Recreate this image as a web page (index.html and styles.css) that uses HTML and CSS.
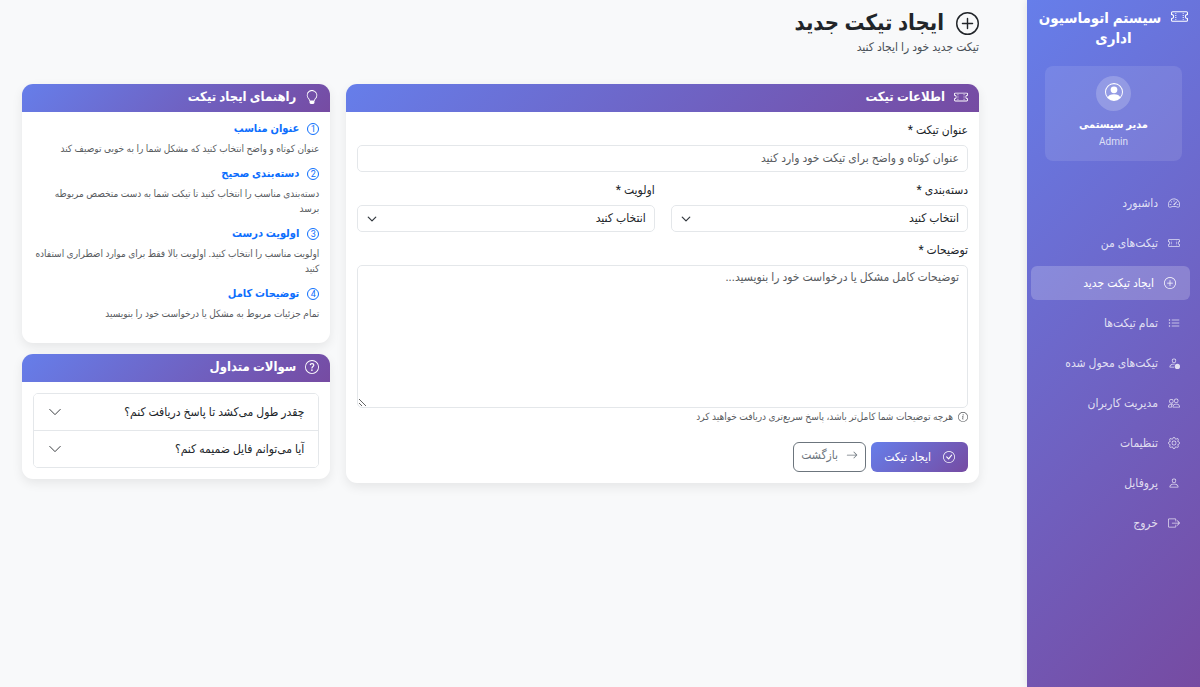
FILE: index.html
```html
<!DOCTYPE html>
<html lang="fa" dir="rtl">
<head>
    <meta charset="UTF-8">
    <meta name="viewport" content="width=device-width, initial-scale=1.0">
    <title>ایجاد تیکت جدید - سیستم اتوماسیون اداری</title>
    <link rel="stylesheet" href="styles.css">
</head>
<body>
    <!-- Icons -->
    <svg class="sprite" aria-hidden="true">
        <symbol id="ticket" viewBox="0 0 16 16"><path d="M4 4.85v.9h1v-.9zm7 0v.9h1v-.9zm-7 1.8v.9h1v-.9zm7 0v.9h1v-.9zm-7 1.8v.9h1v-.9zm7 0v.9h1v-.9zm-7 1.8v.9h1v-.9zm7 0v.9h1v-.9z"/><path d="M1.5 3A1.5 1.5 0 0 0 0 4.5V6a.5.5 0 0 0 .5.5 1.5 1.5 0 1 1 0 3 .5.5 0 0 0-.5.5v1.5A1.5 1.5 0 0 0 1.5 13h13a1.5 1.5 0 0 0 1.5-1.5V10a.5.5 0 0 0-.5-.5 1.5 1.5 0 0 1 0-3A.5.5 0 0 0 16 6V4.5A1.5 1.5 0 0 0 14.5 3zM1 4.5a.5.5 0 0 1 .5-.5h13a.5.5 0 0 1 .5.5v1.05a2.5 2.5 0 0 0 0 4.9v1.05a.5.5 0 0 1-.5.5h-13a.5.5 0 0 1-.5-.5v-1.05a2.5 2.5 0 0 0 0-4.9z"/></symbol>
        <symbol id="plus-circle" viewBox="0 0 16 16"><path d="M8 15A7 7 0 1 1 8 1a7 7 0 0 1 0 14m0 1A8 8 0 1 0 8 0a8 8 0 0 0 0 16"/><path d="M8 4a.5.5 0 0 1 .5.5v3h3a.5.5 0 0 1 0 1h-3v3a.5.5 0 0 1-1 0v-3h-3a.5.5 0 0 1 0-1h3v-3A.5.5 0 0 1 8 4"/></symbol>
        <symbol id="speedometer" viewBox="0 0 16 16"><path d="M8 4a.5.5 0 0 1 .5.5V6a.5.5 0 0 1-1 0V4.5A.5.5 0 0 1 8 4M3.732 5.732a.5.5 0 0 1 .707 0l.915.914a.5.5 0 1 1-.708.708l-.914-.915a.5.5 0 0 1 0-.707M2 10a.5.5 0 0 1 .5-.5h1.586a.5.5 0 0 1 0 1H2.5A.5.5 0 0 1 2 10m9.5 0a.5.5 0 0 1 .5-.5h1.5a.5.5 0 0 1 0 1H12a.5.5 0 0 1-.5-.5m.754-4.246a.39.39 0 0 0-.527-.02L7.547 9.31a.91.91 0 1 0 1.302 1.258l3.434-4.297a.39.39 0 0 0-.029-.518z"/><path fill-rule="evenodd" d="M0 10a8 8 0 1 1 15.547 2.661c-.442 1.253-1.845 1.602-2.932 1.25C11.309 13.488 9.475 13 8 13c-1.474 0-3.31.488-4.615.911-1.087.352-2.49.003-2.932-1.25A8 8 0 0 1 0 10m8-7a7 7 0 0 0-6.603 9.329c.203.575.923.876 1.68.63C4.397 12.533 6.358 12 8 12s3.604.532 4.923.96c.757.245 1.477-.056 1.68-.631A7 7 0 0 0 8 3"/></symbol>
        <symbol id="list" viewBox="0 0 16 16"><circle cx="2" cy="4" r="1"/><circle cx="2" cy="8" r="1"/><circle cx="2" cy="12" r="1"/><path d="M5.5 4h9M5.5 8h9M5.5 12h9" fill="none" stroke="currentColor" stroke-linecap="round"/></symbol>
        <symbol id="person-dot" viewBox="0 0 16 16"><circle cx="12.5" cy="12.5" r="3.5"/><path d="M11 5a3 3 0 1 1-6 0 3 3 0 0 1 6 0M8 7a2 2 0 1 0 0-4 2 2 0 0 0 0 4"/><path d="M8.256 14a4.5 4.5 0 0 1-.229-1.004H3c.001-.246.154-.986.832-1.664C4.484 10.68 5.711 10 8 10q.39 0 .74.025c.226-.341.496-.65.804-.918Q8.844 9.002 8 9c-5 0-6 3-6 4s1 1 1 1z"/></symbol>
        <symbol id="people" viewBox="0 0 16 16"><path d="M15 14s1 0 1-1-1-4-5-4-5 3-5 4 1 1 1 1zm-7.978-1L7 12.996c.001-.264.167-1.03.76-1.72C8.312 10.629 9.282 10 11 10c1.717 0 2.687.63 3.24 1.276.593.69.758 1.457.76 1.72l-.008.002-.014.002zM11 7a2 2 0 1 0 0-4 2 2 0 0 0 0 4m3-2a3 3 0 1 1-6 0 3 3 0 0 1 6 0M6.936 9.28a6 6 0 0 0-1.23-.247A7 7 0 0 0 5 9c-4 0-5 3-5 4q0 1 1 1h4.216A2.24 2.24 0 0 1 5 13c0-1.01.377-2.042 1.09-2.904.243-.294.526-.569.846-.816M4.92 10A5.5 5.5 0 0 0 4 13H1c0-.26.164-1.03.76-1.724.545-.636 1.492-1.256 3.16-1.275ZM1.5 5.5a3 3 0 1 1 6 0 3 3 0 0 1-6 0m3-2a2 2 0 1 0 0 4 2 2 0 0 0 0-4"/></symbol>
        <symbol id="gear" viewBox="0 0 16 16"><path d="M8 4.754a3.246 3.246 0 1 0 0 6.492 3.246 3.246 0 0 0 0-6.492M5.754 8a2.246 2.246 0 1 1 4.492 0 2.246 2.246 0 0 1-4.492 0"/><path d="M9.796 1.343c-.527-1.79-3.065-1.79-3.592 0l-.094.319a.873.873 0 0 1-1.255.52l-.292-.16c-1.64-.892-3.433.902-2.54 2.541l.159.292a.873.873 0 0 1-.52 1.255l-.319.094c-1.79.527-1.79 3.065 0 3.592l.319.094a.873.873 0 0 1 .52 1.255l-.16.292c-.892 1.64.901 3.434 2.541 2.54l.292-.159a.873.873 0 0 1 1.255.52l.094.319c.527 1.79 3.065 1.79 3.592 0l.094-.319a.873.873 0 0 1 1.255-.52l.292.16c1.64.893 3.434-.902 2.54-2.541l-.159-.292a.873.873 0 0 1 .52-1.255l.319-.094c1.79-.527 1.79-3.065 0-3.592l-.319-.094a.873.873 0 0 1-.52-1.255l.16-.292c.893-1.64-.902-3.433-2.541-2.54l-.292.159a.873.873 0 0 1-1.255-.52zm-2.633.283c.246-.835 1.428-.835 1.674 0l.094.319a1.873 1.873 0 0 0 2.693 1.115l.291-.16c.764-.415 1.6.42 1.184 1.185l-.159.292a1.873 1.873 0 0 0 1.116 2.692l.318.094c.835.246.835 1.428 0 1.674l-.319.094a1.873 1.873 0 0 0-1.115 2.693l.16.291c.415.764-.42 1.6-1.185 1.184l-.291-.159a1.873 1.873 0 0 0-2.693 1.116l-.094.318c-.246.835-1.428.835-1.674 0l-.094-.319a1.873 1.873 0 0 0-2.692-1.115l-.292.16c-.764.415-1.6-.42-1.184-1.185l.159-.291A1.873 1.873 0 0 0 1.945 8.93l-.319-.094c-.835-.246-.835-1.428 0-1.674l.319-.094A1.873 1.873 0 0 0 3.06 4.377l-.16-.292c-.415-.764.42-1.6 1.185-1.184l.292.159a1.873 1.873 0 0 0 2.692-1.115z"/></symbol>
        <symbol id="person" viewBox="0 0 16 16"><path d="M8 8a3 3 0 1 0 0-6 3 3 0 0 0 0 6m2-3a2 2 0 1 1-4 0 2 2 0 0 1 4 0m4 8c0 1-1 1-1 1H3s-1 0-1-1 1-4 6-4 6 3 6 4m-1-.004c-.001-.246-.154-.986-.832-1.664C11.516 10.68 10.289 10 8 10s-3.516.68-4.168 1.332c-.678.678-.83 1.418-.832 1.664z"/></symbol>
        <symbol id="logout" viewBox="0 0 16 16"><path d="M10 12.5a.5.5 0 0 1-.5.5h-8a.5.5 0 0 1-.5-.5v-9a.5.5 0 0 1 .5-.5h8a.5.5 0 0 1 .5.5v2a.5.5 0 0 0 1 0v-2A1.5 1.5 0 0 0 9.5 2h-8A1.5 1.5 0 0 0 0 3.5v9A1.5 1.5 0 0 0 1.5 14h8a1.5 1.5 0 0 0 1.5-1.5v-2a.5.5 0 0 0-1 0z"/><path d="M15.854 8.354a.5.5 0 0 0 0-.708l-3-3a.5.5 0 0 0-.708.708L14.293 7.5H5.5a.5.5 0 0 0 0 1h8.793l-2.147 2.146a.5.5 0 0 0 .708.708z"/></symbol>
        <symbol id="person-circle" viewBox="0 0 16 16"><path d="M11 6a3 3 0 1 1-6 0 3 3 0 0 1 6 0"/><path fill-rule="evenodd" d="M0 8a8 8 0 1 1 16 0A8 8 0 0 1 0 8m8-7a7 7 0 0 0-5.468 11.37C3.242 11.226 4.805 10 8 10s4.757 1.225 5.468 2.37A7 7 0 0 0 8 1"/></symbol>
        <symbol id="lightbulb" viewBox="0 0 16 16"><path d="M2 6a6 6 0 1 1 10.174 4.31c-.203.196-.359.4-.453.619l-.762 1.769A.5.5 0 0 1 10.5 13a.5.5 0 0 1 0 1 .5.5 0 0 1 0 1l-.224.447a1 1 0 0 1-.894.553H6.618a1 1 0 0 1-.894-.553L5.5 15a.5.5 0 0 1 0-1 .5.5 0 0 1 0-1 .5.5 0 0 1-.46-.302l-.761-1.77a2 2 0 0 0-.453-.618A5.98 5.98 0 0 1 2 6m6-5a5 5 0 0 0-3.479 8.592c.263.254.514.564.676.941L5.83 12h4.342l.632-1.467c.162-.377.413-.687.676-.941A5 5 0 0 0 8 1"/></symbol>
        <symbol id="question" viewBox="0 0 16 16"><path d="M8 15A7 7 0 1 1 8 1a7 7 0 0 1 0 14m0 1A8 8 0 1 0 8 0a8 8 0 0 0 0 16"/><path d="M5.9 5.9C6 4.7 6.8 4.1 8 4.1s2.1.6 2.1 1.7c0 1.5-2.2 1.7-2.2 3.5v.3" fill="none" stroke="currentColor" stroke-width="1.3"/><circle cx="7.9" cy="11.6" r=".95"/></symbol>
        <symbol id="info" viewBox="0 0 16 16"><path d="M8 15A7 7 0 1 1 8 1a7 7 0 0 1 0 14m0 1A8 8 0 1 0 8 0a8 8 0 0 0 0 16"/><path d="M6.7 7.2l1.5-.2-.9 4.2q-.1.6 1.2.2" fill="none" stroke="currentColor" stroke-width="1.2"/><circle cx="8.2" cy="4.5" r="1"/></symbol>
        <symbol id="check" viewBox="0 0 16 16"><path d="M8 15A7 7 0 1 1 8 1a7 7 0 0 1 0 14m0 1A8 8 0 1 0 8 0a8 8 0 0 0 0 16"/><path d="m10.97 4.97-.02.022-3.473 4.425-2.093-2.094a.75.75 0 0 0-1.06 1.06L6.97 11.03a.75.75 0 0 0 1.079-.02l3.992-4.99a.75.75 0 0 0-1.071-1.05"/></symbol>
        <symbol id="arrow" viewBox="0 0 16 16"><path d="M1 8a.5.5 0 0 1 .5-.5h11.793l-3.147-3.146a.5.5 0 0 1 .708-.708l4 4a.5.5 0 0 1 0 .708l-4 4a.5.5 0 0 1-.708-.708L13.293 8.5H1.5A.5.5 0 0 1 1 8"/></symbol>
        <symbol id="chevron" viewBox="0 0 16 16"><path d="M2 5l6 6 6-6" fill="none" stroke="currentColor" stroke-linecap="round" stroke-linejoin="round"/></symbol>
    </svg>

    <div class="layout">
        <!-- Sidebar -->
        <aside class="sidebar">
            <div class="brand"><svg class="icon"><use href="#ticket"/></svg>سیستم اتوماسیون اداری</div>

            <div class="user-info">
                <div class="avatar"><svg class="icon"><use href="#person-circle"/></svg></div>
                <div class="user-name">مدیر سیستمی</div>
                <div class="user-role">Admin</div>
            </div>

            <nav class="menu">
                <a href="#"><svg class="icon"><use href="#speedometer"/></svg>داشبورد</a>
                <a href="#"><svg class="icon"><use href="#ticket"/></svg>تیکت‌های من</a>
                <a href="#" class="active"><svg class="icon"><use href="#plus-circle"/></svg>ایجاد تیکت جدید</a>
                <a href="#"><svg class="icon"><use href="#list"/></svg>تمام تیکت‌ها</a>
                <a href="#"><svg class="icon"><use href="#person-dot"/></svg>تیکت‌های محول شده</a>
                <a href="#"><svg class="icon"><use href="#people"/></svg>مدیریت کاربران</a>
                <a href="#"><svg class="icon"><use href="#gear"/></svg>تنظیمات</a>
                <a href="#"><svg class="icon"><use href="#person"/></svg>پروفایل</a>
                <a href="#"><svg class="icon"><use href="#logout"/></svg>خروج</a>
            </nav>
        </aside>

        <main class="content">
            <header class="page-header">
                <h1><svg class="icon"><use href="#plus-circle"/></svg>ایجاد تیکت جدید</h1>
                <p>تیکت جدید خود را ایجاد کنید</p>
            </header>

            <div class="row">
                <!-- Ticket form -->
                <section class="card card-form">
                    <h2 class="card-header"><svg class="icon"><use href="#ticket"/></svg>اطلاعات تیکت</h2>
                    <form class="card-body">
                        <div class="field">
                            <label for="title">عنوان تیکت *</label>
                            <input type="text" id="title" class="control" placeholder="عنوان کوتاه و واضح برای تیکت خود وارد کنید">
                        </div>
                        <div class="field-row">
                            <div class="field">
                                <label for="category">دسته‌بندی *</label>
                                <select id="category" class="control select">
                                    <option>انتخاب کنید</option>
                                </select>
                            </div>
                            <div class="field">
                                <label for="priority">اولویت *</label>
                                <select id="priority" class="control select">
                                    <option>انتخاب کنید</option>
                                </select>
                            </div>
                        </div>
                        <div class="field">
                            <label for="description">توضیحات *</label>
                            <textarea id="description" class="control" placeholder="توضیحات کامل مشکل یا درخواست خود را بنویسید..."></textarea>
                            <div class="form-text"><svg class="icon"><use href="#info"/></svg>هرچه توضیحات شما کامل‌تر باشد، پاسخ سریع‌تری دریافت خواهید کرد</div>
                        </div>
                        <div class="actions">
                            <button type="submit" class="btn btn-primary"><svg class="icon"><use href="#check"/></svg>ایجاد تیکت</button>
                            <a href="#" class="btn btn-outline"><svg class="icon"><use href="#arrow"/></svg>بازگشت</a>
                        </div>
                    </form>
                </section>

                <div class="side">
                    <!-- Guide -->
                    <section class="card">
                        <h2 class="card-header"><svg class="icon"><use href="#lightbulb"/></svg>راهنمای ایجاد تیکت</h2>
                        <div class="card-body guide">
                            <h3><span class="step">1</span>عنوان مناسب</h3>
                            <p>عنوان کوتاه و واضح انتخاب کنید که مشکل شما را به خوبی توصیف کند</p>
                            <h3><span class="step">2</span>دسته‌بندی صحیح</h3>
                            <p>دسته‌بندی مناسب را انتخاب کنید تا تیکت شما به دست متخصص مربوطه برسد</p>
                            <h3><span class="step">3</span>اولویت درست</h3>
                            <p>اولویت مناسب را انتخاب کنید. اولویت بالا فقط برای موارد اضطراری استفاده کنید</p>
                            <h3><span class="step">4</span>توضیحات کامل</h3>
                            <p>تمام جزئیات مربوط به مشکل یا درخواست خود را بنویسید</p>
                        </div>
                    </section>

                    <!-- FAQ -->
                    <section class="card">
                        <h2 class="card-header"><svg class="icon"><use href="#question"/></svg>سوالات متداول</h2>
                        <div class="card-body">
                            <div class="accordion">
                                <button type="button">چقدر طول می‌کشد تا پاسخ دریافت کنم؟<svg class="icon"><use href="#chevron"/></svg></button>
                                <button type="button">آیا می‌توانم فایل ضمیمه کنم؟<svg class="icon"><use href="#chevron"/></svg></button>
                            </div>
                        </div>
                    </section>
                </div>
            </div>
        </main>
    </div>
</body>
</html>
```
FILE: styles.css
```css
* { box-sizing: border-box; }
body { margin: 0; font-family: Roboto, 'DejaVu Sans Condensed', 'DejaVu Sans', sans-serif; font-size: 12px; line-height: 16px; color: #212529; background-color: #f8f9fa; }
h1, h2, h3, p { margin: 0; }
a { text-decoration: none; }
button, input, select, textarea { font-family: inherit; font-size: inherit; line-height: inherit; color: inherit; }
.sprite { display: none; }
.icon { width: 12px; height: 12px; fill: currentColor; flex-shrink: 0; }

.layout { display: flex; min-height: 100vh; }

/* Sidebar */
.sidebar { width: 173px; flex-shrink: 0; padding: 8px 6px; color: #fff; background: linear-gradient(135deg, #667eea 0%, #764ba2 100%); box-shadow: 0 0 8px rgba(0, 0, 0, 0.1); }
.brand { font-size: 15px; font-weight: bold; line-height: 20px; text-align: center; }
.brand .icon { width: 17px; height: 17px; margin-left: 10px; vertical-align: -2px; }
.user-info { margin: 18px 12px 25px; padding: 10px; text-align: center; background-color: rgba(255, 255, 255, 0.1); border-radius: 8px; }
.avatar { display: flex; align-items: center; justify-content: center; width: 35px; height: 35px; margin: 0 auto 6px; padding-bottom: 4px; background-color: rgba(255, 255, 255, 0.2); border-radius: 50%; }
.avatar .icon { width: 18px; height: 18px; }
.user-name { font-size: 11px; font-weight: bold; line-height: 16px; }
.user-role { font-size: 10px; line-height: 18px; opacity: 0.75; }
.menu { display: flex; flex-direction: column; gap: 6px; padding-left: 2px; }
.menu a { display: flex; align-items: center; gap: 10px; padding: 9px 14px; color: rgba(255, 255, 255, 0.8); border-radius: 6px; }
.menu a.active { color: #fff; background-color: rgba(255, 255, 255, 0.2); transform: translateX(-4px); }

/* Page */
.content { flex: 1; min-width: 0; padding: 8px 48px 24px 22px; }
.page-header { margin-bottom: 28px; color: #212529; }
.page-header h1 { display: flex; align-items: center; gap: 12px; font-size: 22px; line-height: 30px; }
.page-header h1 .icon { width: 23px; height: 23px; }
.page-header p { line-height: 18px; color: #495057; }
.row { display: grid; grid-template-columns: repeat(12, 1fr); gap: 16px; align-items: start; }
.card-form { grid-column: span 8; }
.side { grid-column: span 4; display: flex; flex-direction: column; gap: 11px; }

/* Cards */
.card { background-color: #fff; border-radius: 11px; box-shadow: 0 4px 11px rgba(0, 0, 0, 0.08); overflow: hidden; }
.card-header { display: flex; align-items: center; gap: 9px; height: 28px; padding: 0 11px 2px; font-size: 13px; color: #fff; background: linear-gradient(135deg, #667eea 0%, #764ba2 100%); }
.card-header .icon { width: 14px; height: 14px; }
.card-body { padding: 11px; }

/* Form */
.field { margin-bottom: 11px; }
.field label { display: block; margin-bottom: 8px; line-height: 14px; }
.field-row { display: grid; grid-template-columns: 1fr 1fr; gap: 16px; }
.control { display: block; width: 100%; height: 27px; padding: 3px 8px 5px; background-color: #fff; border: 1px solid #e4e7ea; border-radius: 5px; }
.control::placeholder { color: #595c5f; opacity: 1; }
.select { appearance: none; background: #fff url("data:image/svg+xml,%3csvg xmlns='http://www.w3.org/2000/svg' viewBox='0 0 16 16'%3e%3cpath fill='none' stroke='%23343a40' stroke-linecap='round' stroke-linejoin='round' stroke-width='2' d='m2 5 6 6 6-6'/%3e%3c/svg%3e") no-repeat left 9px center / 10px 10px; }
textarea.control { height: 143px; resize: vertical; }
.form-text { display: flex; align-items: center; gap: 5px; margin-top: 1px; font-size: 10px; color: #595c5f; }
.form-text .icon { width: 10px; height: 10px; }
.actions { display: flex; gap: 5px; margin-top: 17px; }
.btn { display: flex; align-items: center; gap: 12px; height: 30px; padding: 0 13px; border: 1px solid transparent; border-radius: 6px; cursor: pointer; }
.btn-primary { color: #fff; border: 0; background: linear-gradient(135deg, #667eea 0%, #764ba2 100%); }
.btn-outline { gap: 8px; padding: 0 7px 5px; color: #6c757d; border-color: #6c757d; }

/* Guide */
.guide { padding-top: 10px; }
.guide h3 { display: flex; align-items: center; gap: 8px; font-size: 11px; line-height: 14px; color: #0d6efd; }
.guide p { margin: 5px 0 11px; font-size: 10px; line-height: 15px; color: #595c5f; }
.step { display: flex; align-items: center; justify-content: center; width: 12px; height: 12px; border: 1px solid #0d6efd; border-radius: 50%; font-size: 9px; line-height: 10px; font-weight: normal; }

/* FAQ */
.accordion { border: 1px solid #e4e7ea; border-radius: 5px; overflow: hidden; }
.accordion button { display: flex; align-items: center; justify-content: space-between; width: 100%; height: 36px; padding: 0 14px; text-align: right; background-color: #fff; border: 0; cursor: pointer; }
.accordion button + button { height: 37px; border-top: 1px solid #e4e7ea; }
.accordion .icon { width: 14px; height: 14px; }
```
